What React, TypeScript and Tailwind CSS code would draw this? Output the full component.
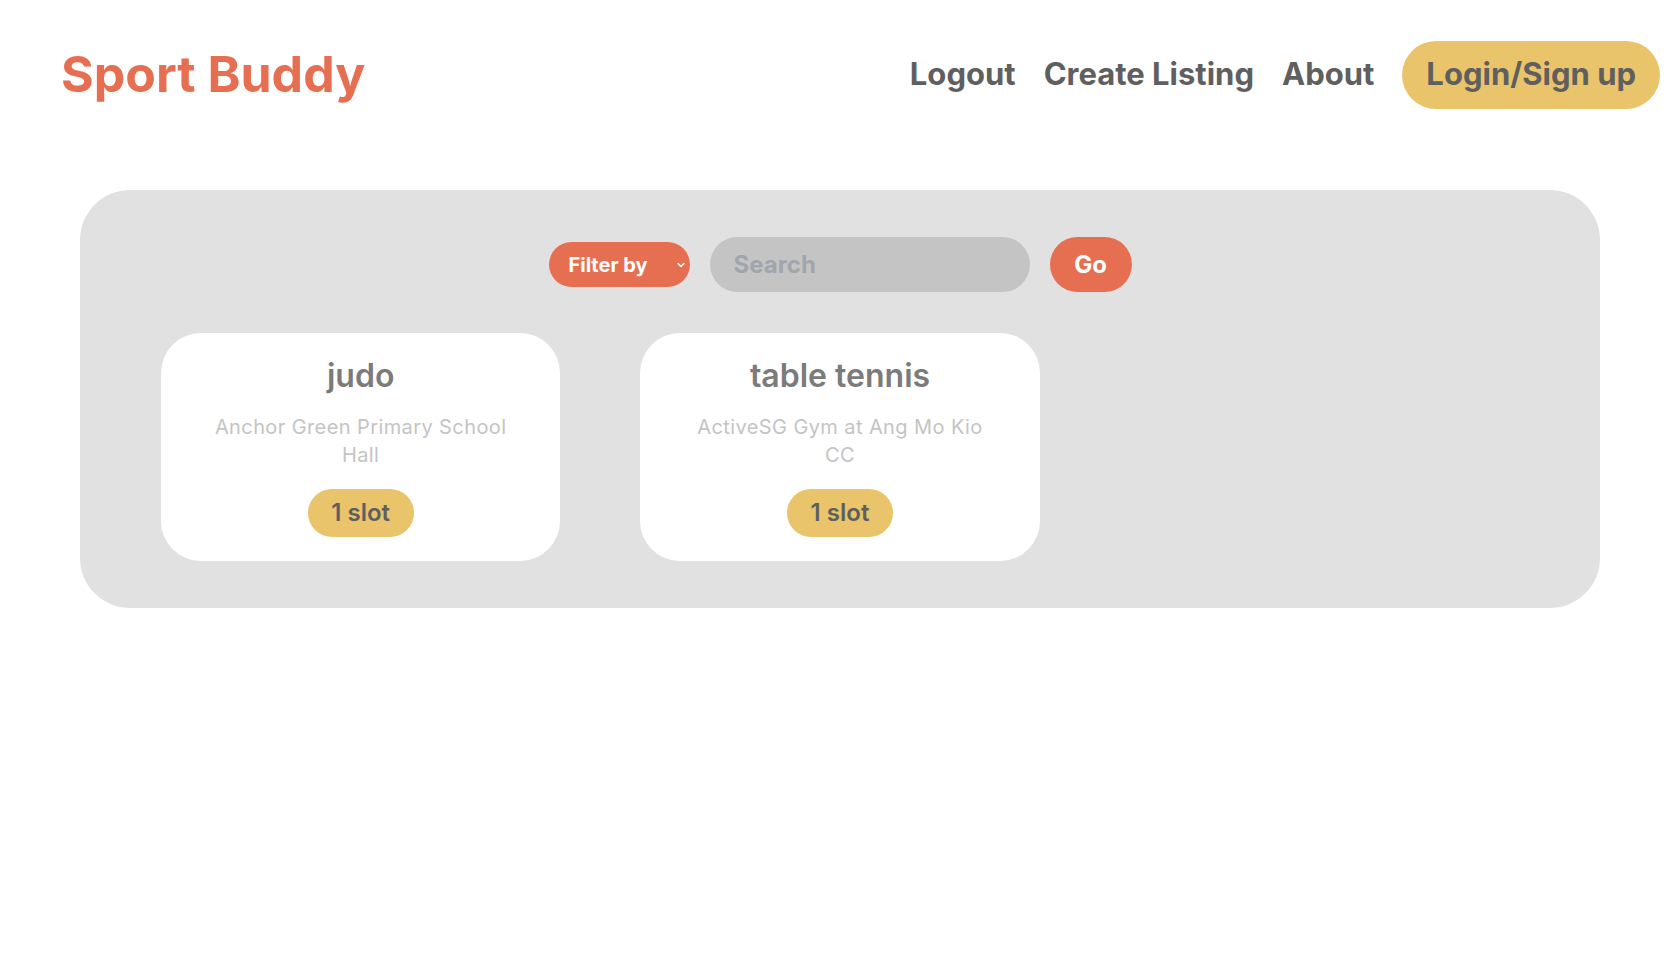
import { ChevronDown } from "lucide-react";

const listings = [
  { sport: "judo", location: "Anchor Green Primary School Hall", slots: 1 },
  { sport: "table tennis", location: "ActiveSG Gym at Ang Mo Kio CC", slots: 1 },
];

const App = () => {
  return (
    <div className="min-h-screen bg-white font-['Inter',sans-serif]">
      <header className="flex items-center justify-between pl-[61px] pr-[19px] pt-[37px]">
        <h1 className="text-[50px] font-bold text-[#e76f51]">Sport Buddy</h1>
        <nav className="flex items-center gap-[28px] text-[31px] font-bold text-[#5f5f5f]">
          <a href="#">Logout</a>
          <a href="#">Create Listing</a>
          <a href="#">About</a>
          <button className="h-[68px] rounded-full bg-[#e9c46a] px-[24px] text-[31px] font-bold text-[#5f5f5f]">
            Login/Sign up
          </button>
        </nav>
      </header>

      <main className="mx-[80px] mt-[78px] w-[1520px] rounded-[50px] bg-[#e1e1e1] pt-[47px] pb-[47px]">
        <div className="flex items-center justify-center gap-[20px]">
          <div className="relative">
            <select className="h-[45px] w-[141px] appearance-none rounded-full bg-[#e76f51] pl-[20px] text-[20px] font-bold text-white outline-none">
              <option>Filter by</option>
              <option>Sport</option>
              <option>Location</option>
            </select>
            <ChevronDown
              size={12}
              strokeWidth={3}
              className="pointer-events-none absolute right-[3px] top-[17px] text-white"
            />
          </div>
          <input
            placeholder="Search"
            className="h-[55px] w-[320px] rounded-full bg-[#c4c4c4] px-[24px] text-[24px] font-bold text-[#5f5f5f] outline-none placeholder:text-[#a0a5ae]"
          />
          <button className="h-[55px] w-[82px] rounded-full bg-[#e76f51] text-[24px] font-bold text-white">
            Go
          </button>
        </div>

        <div className="mt-[41px] grid grid-cols-3 gap-[80px] px-[81px]">
          {listings.map((item, i) => (
            <div
              key={i}
              className="flex h-[228px] flex-col items-center rounded-[40px] bg-white px-[50px] pt-[20px] text-center"
            >
              <h2 className="text-[32px] leading-[45px] font-semibold text-[#7b7b7b]">{item.sport}</h2>
              <p className="mt-[15px] text-[20px] leading-[28px] tracking-[0.4px] text-[#c4c4c4]">{item.location}</p>
              <span className="mt-[20px] flex h-[48px] w-[106px] items-center justify-center rounded-full bg-[#e9c46a] text-[24px] font-semibold text-[#5f5f5f]">
                {item.slots} slot
              </span>
            </div>
          ))}
        </div>
      </main>
    </div>
  );
};

export default App;
